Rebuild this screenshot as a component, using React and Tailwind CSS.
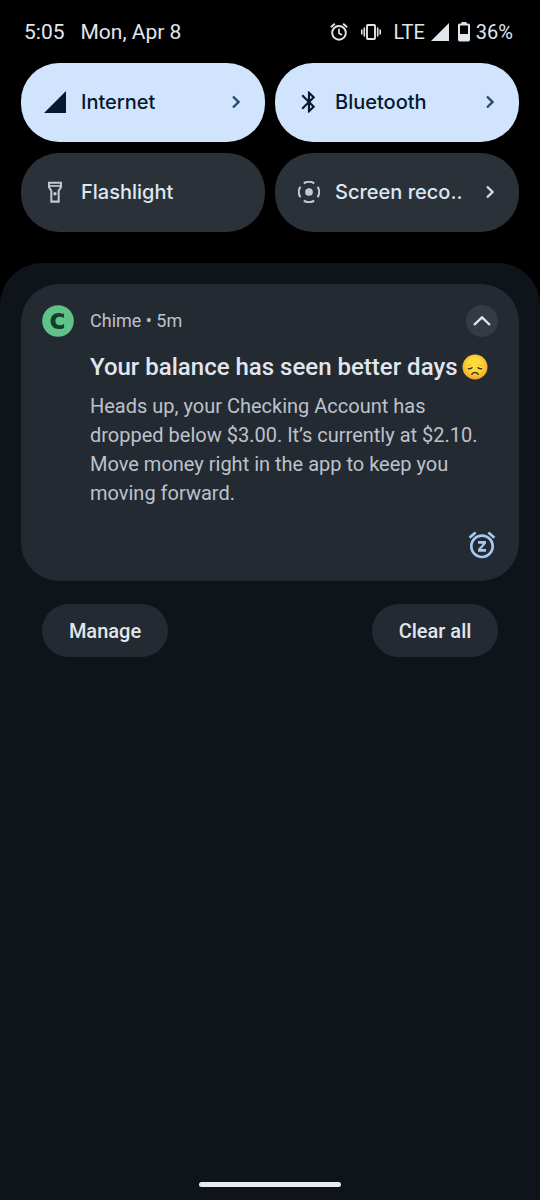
import React, { useState } from 'react';
import clsx from 'clsx';
import { MdBluetooth, MdSnooze } from 'react-icons/md';

const AlarmIcon = ({ className }) => (
  <svg viewBox="0 0 24 24" className={className} fill="none" stroke="currentColor" aria-hidden="true">
    <circle cx="12" cy="13" r="8.2" strokeWidth="2.3" />
    <path d="M12 8v5.4l3.6 2.2" strokeWidth="2" />
    <path d="M2.2 6.2 7 2.2M21.8 6.2 17 2.2" strokeWidth="2.3" />
  </svg>
);

const SignalIcon = ({ className }) => (
  <svg viewBox="0 0 20 20" className={className} fill="currentColor" aria-hidden="true">
    <path d="M20 0v20H0z" />
  </svg>
);

const VibrateIcon = ({ className }) => (
  <svg viewBox="0 0 20 16" className={className} fill="none" stroke="currentColor" aria-hidden="true">
    <rect x="6" y="1" width="8" height="14" rx="0.8" strokeWidth="1.9" />
    <path d="M3.3 3.5v9M16.7 3.5v9M0.8 5.5v5M19.2 5.5v5" strokeWidth="1.6" />
  </svg>
);

const BatteryIcon = ({ className }) => (
  <svg viewBox="0 0 12 20" className={className} fill="none" aria-hidden="true">
    <path d="M3.5 0h5v2h-5z" fill="currentColor" />
    <rect x="1" y="2.5" width="10" height="16" rx="0.8" stroke="currentColor" strokeWidth="2" />
    <path d="M1 12h10v6.5H1z" fill="currentColor" />
  </svg>
);

const FlashlightIcon = ({ className }) => (
  <svg viewBox="0 0 24 24" className={className} fill="none" stroke="currentColor" aria-hidden="true">
    <path d="M5.5 1.8h13v5L16 10.6V22.5H8V10.6L5.5 6.8z" strokeWidth="2.2" />
    <path d="M5.5 5.4h13" strokeWidth="1.8" />
    <circle cx="12" cy="13.8" r="1.9" fill="currentColor" stroke="none" />
  </svg>
);

const RecordIcon = ({ className }) => (
  <svg viewBox="0 0 24 24" className={className} fill="none" aria-hidden="true">
    <circle cx="12" cy="12" r="4.2" fill="currentColor" />
    <path
      d="M6.3 2.6a10.6 10.6 0 0 1 11.4 0M21.4 6.3a10.6 10.6 0 0 1 0 11.4M17.7 21.4a10.6 10.6 0 0 1-11.4 0M2.6 17.7a10.6 10.6 0 0 1 0-11.4"
      stroke="currentColor"
      strokeWidth="2.2"
    />
  </svg>
);

const Chevron = ({ className }) => (
  <svg viewBox="0 0 8 14" className={className} fill="none" stroke="currentColor" strokeWidth="2.3" aria-hidden="true">
    <path d="M1 1.5 6.5 7 1 12.5" />
  </svg>
);

const ChimeLogo = () => (
  <svg viewBox="0 0 32 32" className="size-8 shrink-0" role="img" aria-label="Chime">
    <circle cx="16" cy="16" r="15.8" fill="#5fc389" />
    <path
      d="M21.9 8.2v4.9c-1.4-.9-2.8-1.3-4.4-1.3-2.6 0-4.1 1.6-4.1 4.2s1.6 4.3 4.2 4.3c1.6 0 3-.4 4.5-1.3v3.9c-1.6.8-3.3 1.2-5.4 1.2-5 0-8.1-3.1-8.1-8s3.2-8 7.9-8c1 0 1.800.1 2.600.5.9.3 1.900.2 2.800-.4z"
      fill="#183d2b"
    />
  </svg>
);

const SadFace = () => (
  <svg viewBox="0 0 26 26" className="size-[26px] shrink-0" role="img" aria-label="disappointed face">
    <defs>
      <radialGradient id="face" cx="50%" cy="42%" r="55%">
        <stop offset="0.5" stopColor="#fddb3a" />
        <stop offset="1" stopColor="#f2a82b" />
      </radialGradient>
    </defs>
    <circle cx="13" cy="13" r="12.5" fill="url(#face)" />
    <path
      d="M6 11.600c1.300-.1 2.300-.5 3.200-1.300M20 11.600c-1.300-.1-2.300-.5-3.200-1.300"
      fill="none"
      stroke="#d39a2a"
      strokeWidth="0.7"
      strokeLinecap="round"
    />
    <path
      d="M6.400 14.700c1.400.3 2.600 0 3.600-.9M19.600 14.700c-1.400.3-2.600 0-3.600-.9M9.800 20.300c1.200-2.400 5.200-2.400 6.400 0"
      fill="none"
      stroke="#4a3524"
      strokeWidth="1.5"
      strokeLinecap="round"
    />
  </svg>
);

const tiles = [
  { id: 'internet', label: 'Internet', icon: SignalIcon, iconClass: 'size-[22px]', arrow: true },
  { id: 'bluetooth', label: 'Bluetooth', icon: MdBluetooth, iconClass: 'size-[26px]', arrow: true },
  { id: 'flashlight', label: 'Flashlight', icon: FlashlightIcon, iconClass: 'size-[22px]', arrow: false },
  { id: 'record', label: 'Screen reco..', icon: RecordIcon, iconClass: 'size-[22px]', arrow: true },
];

const Tile = ({ tile, on, onToggle }) => {
  const Icon = tile.icon;
  return (
    <button
      type="button"
      aria-pressed={on}
      onClick={onToggle}
      className={clsx(
        'flex h-[79px] min-w-0 items-center rounded-[38px] pb-[2px] pl-[21px] pr-[25px]',
        on ? 'bg-[#d1e4fd] text-[#04192f]' : 'bg-[#2b3138] text-[#dfe6f1]'
      )}
    >
      <span className={clsx('flex w-[26px] shrink-0 justify-center', !on && 'text-[#c4cad4]')}>
        <Icon className={tile.iconClass} />
      </span>
      <span className="ml-[13px] flex-1 whitespace-nowrap text-left font-['Inter',sans-serif] text-xl font-medium">
        {tile.label}
      </span>
      {tile.arrow && <Chevron className={clsx('h-[14px] w-2 shrink-0', on ? 'text-[#26496f]' : 'text-[#d3d9e2]')} />}
    </button>
  );
};

const App = () => {
  const [active, setActive] = useState({ internet: true, bluetooth: true });
  const [expanded, setExpanded] = useState(true);
  const [cleared, setCleared] = useState(false);

  const toggle = (id) => setActive({ ...active, [id]: !active[id] });

  return (
    <div className="flex min-h-screen flex-col bg-black font-['Roboto',sans-serif] text-[#e1e6ee]">
      {/* Status bar */}
      <header className="flex h-[63px] items-center justify-between pl-6 pr-[27px] text-xl">
        <div className="flex gap-4 text-[21px] leading-7">
          <span>5:05</span>
          <span>Mon, Apr 8</span>
        </div>
        <div className="flex items-center">
          <AlarmIcon className="size-5" />
          <VibrateIcon className="ml-3 h-4 w-5" />
          <span className="ml-3">LTE</span>
          <SignalIcon className="ml-[6px] size-[18px]" />
          <BatteryIcon className="ml-[9px] h-5 w-3" />
          <span className="ml-[6px]">36%</span>
        </div>
      </header>

      {/* Quick settings */}
      <section className="grid grid-cols-2 gap-x-[10px] gap-y-[11px] px-[21px]">
        {tiles.map((tile) => (
          <Tile key={tile.id} tile={tile} on={!!active[tile.id]} onToggle={() => toggle(tile.id)} />
        ))}
      </section>

      {/* Notification shade */}
      <main className="mt-[31px] flex flex-1 flex-col rounded-t-[42px] bg-[#0f141b] px-[21px] pt-[21px]">
        {!cleared && (
          <article className="rounded-[38px] bg-[#242a31] px-[21px] pb-5 pt-[21px]">
            <div className="flex items-center">
              <ChimeLogo />
              <p className="ml-4 flex-1 text-lg text-[#bcc2cb]">Chime • 5m</p>
              <button
                type="button"
                aria-label={expanded ? 'Collapse' : 'Expand'}
                onClick={() => setExpanded(!expanded)}
                className="flex size-8 items-center justify-center rounded-full bg-[#353b42]"
              >
                <svg viewBox="0 0 18 10" className="h-[10px] w-[18px]" fill="none" stroke="currentColor" strokeWidth="2.4">
                  <path d={expanded ? 'M1 9l8-7.6L17 9' : 'M1 1l8 7.6L17 1'} />
                </svg>
              </button>
            </div>
            <div className="ml-12">
              <h2 className="mt-4 flex items-center gap-1 whitespace-nowrap text-2xl font-medium leading-7">
                Your balance has seen better days
                <SadFace />
              </h2>
              {expanded && (
                <p className="mt-[11px] text-xl leading-[29px] text-[#bcc2cb]">
                  Heads up, your Checking Account has dropped below $3.00. It’s currently at $2.10. Move money right in
                  the app to keep you moving forward.
                </p>
              )}
            </div>
            <div className="mt-[21px] flex justify-end">
              <button type="button" aria-label="Snooze" className="text-[#a5c8f5]">
                <MdSnooze className="size-8" />
              </button>
            </div>
          </article>
        )}

        <div className="mt-[23px] flex justify-between px-[21px] text-xl font-medium">
          <button type="button" className="h-[53px] w-[126px] rounded-full bg-[#242a31]">
            Manage
          </button>
          <button type="button" onClick={() => setCleared(true)} className="h-[53px] w-[126px] rounded-full bg-[#242a31]">
            Clear all
          </button>
        </div>

        {/* Gesture bar */}
        <div className="mt-auto flex justify-center pb-[13px] pt-10">
          <div className="h-[5px] w-[142px] rounded-full bg-[#e8ecec]"></div>
        </div>
      </main>
    </div>
  );
};

export default App;
